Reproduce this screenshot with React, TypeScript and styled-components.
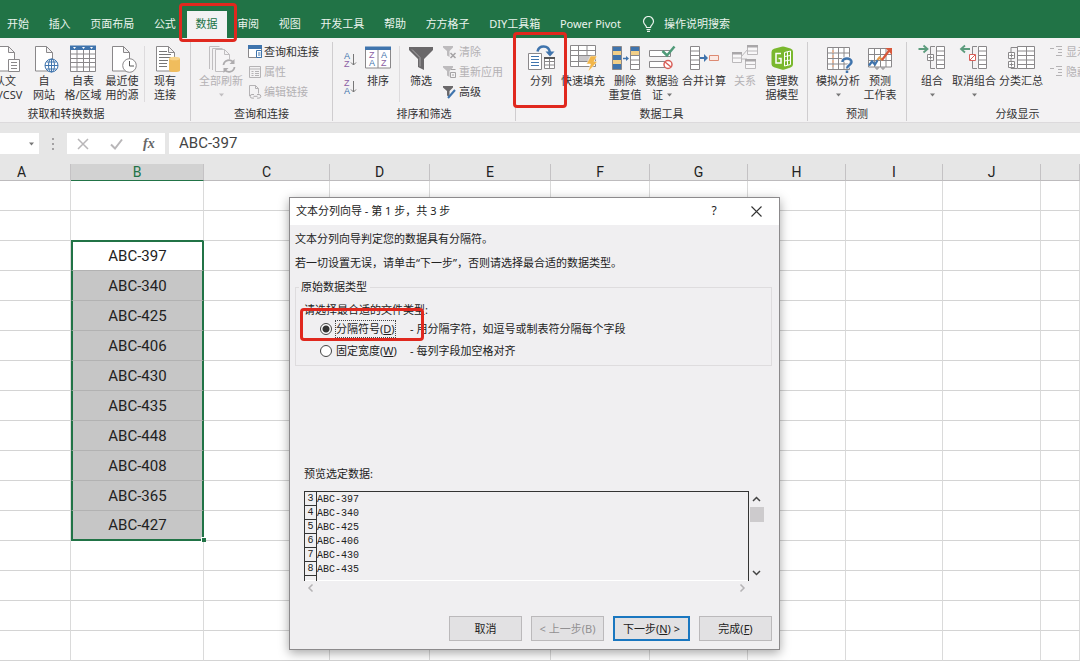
import React from 'react';
import styled, { createGlobalStyle, css } from 'styled-components';

const GREEN = '#217346';
const SANS = '"Noto Sans", "Noto Sans CJK SC", sans-serif';
const CELL = 'Roboto, "Noto Sans CJK SC", sans-serif';

const Global = createGlobalStyle`
  *, *::before, *::after { box-sizing: border-box; }
  body { margin: 0; background: #fff; font: 11px/14px ${SANS}; color: #333; }
  button, input { font: inherit; color: inherit; }
  button { background: none; border: 0; padding: 0; margin: 0; cursor: default; }
  svg { display: block; flex: none; }
`;

const Page = styled.div`
  position: relative;
  display: flex;
  flex-direction: column;
  min-height: 100vh;
  overflow: hidden;
  background: #e6e6e6;
`;

/* ---------- tab strip ---------- */
const TabBar = styled.header`
  display: flex;
  height: 38px;
  padding: 11px 0 0 7px;
  background: ${GREEN};
  color: #eaf3ed;
`;
const TabList = styled.nav`
  display: flex;
  flex: 0 0 614px;
  justify-content: space-between;
`;
const Tab = styled.button<{ $active?: boolean }>`
  position: relative;
  padding-bottom: 2px;
  white-space: nowrap;
  ${(p) => p.$active && css`
    padding: 0 9px 2px;
    margin: 0 -9px;
    background: #f3f2f3;
    color: ${GREEN};
  `}
`;
const Search = styled.button`
  display: flex;
  align-items: center;
  gap: 9px;
  margin-left: 21px;
  padding-bottom: 2px;
  white-space: nowrap;
`;
const Mark = styled.span<{ $x: number; $y: number; $w: number; $h: number }>`
  position: absolute;
  z-index: 3;
  left: ${(p) => p.$x}px;
  top: ${(p) => p.$y}px;
  width: ${(p) => p.$w}px;
  height: ${(p) => p.$h}px;
  border: 3px solid #e0281e;
  border-radius: 4px;
  pointer-events: none;
`;

/* ---------- ribbon ---------- */
const Ribbon = styled.section`
  display: flex;
  height: 84px;
  padding: 4px 0 1px;
  background: #f3f2f3;
`;
const Group = styled.div<{ $w: number; $shift?: number }>`
  display: flex;
  flex: none;
  flex-direction: column;
  width: ${(p) => p.$w}px;
  margin-left: ${(p) => p.$shift ?? 0}px;
  border-right: 1px solid #cfcdcf;
`;
const Tools = styled.div<{ $pad: number }>`
  display: flex;
  flex: 1;
  padding-left: ${(p) => p.$pad}px;
`;
const GroupName = styled.div`
  text-align: center;
`;
const BigButton = styled.button<{ $w: number; $off?: boolean }>`
  position: relative;
  display: flex;
  flex: none;
  flex-direction: column;
  align-items: center;
  width: ${(p) => p.$w}px;
  height: 60px;
  margin-top: 2px;
  white-space: nowrap;
  color: ${(p) => (p.$off ? '#b3b1b3' : '#333')};
`;
const Line = styled.span`
  display: flex;
  align-items: center;
  gap: 4px;
  height: 14px;
`;
const Divider = styled.span`
  width: 1px;
  height: 56px;
  margin: 4px 2px 0;
  background: #dddbdd;
`;
const SmallList = styled.div<{ $gap: number }>`
  display: flex;
  flex-direction: column;
  margin-left: ${(p) => p.$gap}px;
`;
const SmallButton = styled.button<{ $off?: boolean }>`
  display: flex;
  align-items: center;
  gap: 2px;
  height: 20px;
  white-space: nowrap;
  color: ${(p) => (p.$off ? '#b3b1b3' : '#333')};
`;
const SortColumn = styled.div`
  display: flex;
  flex-direction: column;
  width: 16px;
  padding-top: 4px;
`;
const SortButton = styled.button`
  display: flex;
  align-items: center;
  height: 27px;
`;

/* ---------- formula bar ---------- */
const FormulaBar = styled.section`
  display: flex;
  height: 42px;
  padding: 10px 0;
  border-top: 1px solid #dcdadc;
`;
const NameBox = styled.div`
  display: flex;
  align-items: center;
  width: 39px;
  padding-right: 5px;
  background: #fff;
`;
const NameInput = styled.input`
  flex: 1;
  min-width: 0;
  border: 0;
  outline: 0;
  background: none;
`;
const Grip = styled.span`
  display: flex;
  justify-content: center;
  align-items: center;
  width: 28px;
`;
const EntryButtons = styled.div`
  display: flex;
  align-items: center;
  justify-content: space-around;
  width: 98px;
  margin-right: 4px;
  background: #fff;
`;
const FxButton = styled.button`
  font: italic bold 14px/20px "Liberation Serif", serif;
  color: #666;
`;
const FormulaInput = styled.input`
  flex: 1;
  min-width: 0;
  padding: 0 10px 2px;
  border: 0;
  outline: 0;
  background: #fff;
  font: 15px/20px ${CELL};
  color: #444;
`;

/* ---------- sheet ---------- */
const Sheet = styled.main`
  flex: 1;
`;
const Grid = styled.table`
  width: calc(100% + 27px);
  margin-left: -27px;
  table-layout: fixed;
  border-collapse: separate;
  border-spacing: 0;
  background: #fff;
  font: 15px/20px ${CELL};
  color: #222;
`;
const Head = styled.th<{ $on?: boolean }>`
  height: 17px;
  padding: 0;
  border-right: 1px solid #c4c2c4;
  border-bottom: 1px solid ${(p) => (p.$on ? GREEN : '#bdbbbd')};
  background: ${(p) => (p.$on ? '#d2d2d2' : '#e6e6e6')};
  color: ${(p) => (p.$on ? GREEN : '#222')};
  font: 14px/16px ${CELL};
`;
const Cell = styled.td<{ $sel?: boolean; $first?: boolean; $last?: boolean; $before?: boolean }>`
  position: relative;
  height: 30px;
  padding: 0;
  border-right: 1px solid #dadada;
  border-bottom: 1px solid ${(p) => (p.$before ? GREEN : '#d4d4d4')};
  text-align: center;
  ${(p) => p.$sel && css`
    border-right: 2px solid ${GREEN};
    border-left: 2px solid ${GREEN};
    border-top: ${p.$first ? `1px solid ${GREEN}` : '0'};
    border-bottom: ${p.$last ? `2px solid ${GREEN}` : '1px solid #b2b2b2'};
    background: ${p.$first ? '#fff' : '#c6c6c6'};
  `}
`;
const FillHandle = styled.span`
  position: absolute;
  z-index: 1;
  right: -4px;
  bottom: -3px;
  width: 5px;
  height: 5px;
  border: 1px solid #fff;
  border-width: 1px 0 0 1px;
  background: ${GREEN};
`;

/* ---------- wizard dialog ---------- */
const Dialog = styled.form`
  position: absolute;
  z-index: 4;
  left: 289px;
  top: 197px;
  width: 491px;
  border: 1px solid #8c8a8c;
  background: #f0eff1;
  box-shadow: 0 3px 10px rgba(0, 0, 0, 0.35);
  color: #222;
`;
const TitleBar = styled.div`
  display: flex;
  align-items: center;
  height: 27px;
  padding: 0 17px 1px 6px;
  background: #fff;
`;
const Title = styled.h1`
  flex: 1;
  margin: 0;
  font: inherit;
`;
const TitleButton = styled.button`
  display: flex;
  justify-content: center;
  width: 12px;
  margin-left: 30px;
  font-size: 12px;
`;
const Body = styled.div`
  padding: 7px 7px 8px 5px;
`;
const Para = styled.p`
  margin: 0 0 10px;
`;
const Fieldset = styled.fieldset`
  min-width: 0;
  margin: 0;
  padding: 0 3px 3px;
  border: 1px solid #dedcde;
`;
const Legend = styled.legend`
  padding: 0 3px 0 2px;
`;
const Hint = styled.div`
  margin: 9px 0 1px;
  padding-left: 5px;
`;
const Option = styled.div`
  position: relative;
  display: flex;
  align-items: center;
  height: 22px;
  margin-left: 5px;
  padding-left: 16px;
`;
const OptionLabel = styled.label<{ $focus?: boolean }>`
  display: flex;
  align-items: center;
  gap: 3px;
  width: 90px;
  span {
    padding: 1px 0;
    border: 1px dotted ${(p) => (p.$focus ? '#444' : 'transparent')};
  }
`;
const Radio = styled.input`
  appearance: none;
  width: 12px;
  height: 12px;
  margin: 0;
  border: 1px solid #444;
  border-radius: 50%;
  background: #fff;
  &:checked {
    background: radial-gradient(circle, #333 0 3px, #fff 4px);
  }
`;
const PreviewName = styled.div`
  margin: 101px 0 10px 9px;
`;
const PreviewRow = styled.div`
  display: flex;
  margin: 0 8px 0 9px;
`;
const PreviewBox = styled.div`
  flex: 1;
  height: 90px;
  overflow: hidden;
  border: solid #333;
  border-width: 1px 1px 0 0;
  box-shadow: inset 0 -1px #fff;
`;
const PreviewTable = styled.table`
  border-collapse: separate;
  border-spacing: 0;
  font: 10px/12px "Liberation Mono", monospace;
  th {
    width: 13px;
    height: 14px;
    padding: 1px 0 0;
    border: solid #333;
    border-width: 0 1px 1px 1px;
    font-weight: 400;
  }
  td { padding: 1px 0 0; }
`;
const VScroll = styled.div`
  display: flex;
  flex-direction: column;
  align-items: center;
  width: 15px;
  padding: 4px 0;
`;
const Thumb = styled.span`
  width: 14px;
  height: 15px;
  margin: 4px 0 auto;
  background: #cdcbcd;
`;
const HScroll = styled.div`
  display: flex;
  justify-content: space-between;
  margin: 3px 26px 0 12px;
`;
const Actions = styled.div`
  display: flex;
  justify-content: flex-end;
  gap: 9px;
  margin-top: 24px;
`;
const Action = styled.button<{ $primary?: boolean }>`
  width: ${(p) => (p.$primary ? 77 : 73)}px;
  height: 25px;
  border: ${(p) => (p.$primary ? '2px solid #1a77c0' : '1px solid #bbb9bb')};
  background: #e2e1e3;
  white-space: nowrap;
  &:disabled { color: #929092; }
`;

/* ---------- icons ---------- */
const G = '#8a888a';
const B = '#3f74ad';

const Icon = ({ children, w = 30, h = 30 }: { children: React.ReactNode; w?: number; h?: number }) => (
  <svg width={w} height={h} viewBox={`0 0 ${w} ${h}`} fill="none" stroke={G} strokeWidth="1" aria-hidden="true">
    {children}
  </svg>
);
const Sheetlet = ({ x = 6, w = 17, c = G }: { x?: number; w?: number; c?: string }) => (
  <path d={`M${x + 0.5} 2.5h${w - 6}l6 6v18.5h-${w}zM${x + w - 5.5} 2.5v6h6`} fill="#fff" stroke={c} />
);
const IconText = () => (
  <Icon>
    <Sheetlet x={4} w={20} />
    <path d="M18.500 15.500h11v12h-11z" fill="#fff" />
    <path d="M21 18.500h6M21 21.500h6M21 24.500h6" />
  </Icon>
);
const IconWeb = () => (
  <Icon>
    <Sheetlet />
    <circle cx="22.500" cy="21.500" r="6.500" fill="#fff" stroke={B} />
    <ellipse cx="22.500" cy="21.500" rx="3" ry="6.500" stroke={B} />
    <path d="M22.500 15v13M16 21.500h13M17.500 18h10M17.500 25h10" stroke={B} />
  </Icon>
);
const IconTable = () => (
  <Icon>
    <path d="M2.500 2.500h25v25h-25z" fill="#fff" />
    <path d="M2 1.500h26v4.500h-26z" fill={B} stroke="none" />
    <path d="M2.500 10h25M2.500 14.500h25M2.500 18.500h25M2.500 23h25M9 6v21M15.500 6v21M21.500 6v21" />
    <path d="M5 3h3l-1.500 2zM14 3h3l-1.500 2zM22 3h3l-1.500 2z" fill="#fff" stroke="none" />
  </Icon>
);
const IconRecent = () => (
  <Icon>
    <Sheetlet x={5} />
    <circle cx="22.500" cy="21.500" r="6.800" fill="#fff" />
    <path d="M22.500 17v5h4.500" stroke="#555" />
  </Icon>
);
const IconExisting = () => (
  <Icon>
    <Sheetlet x={6} w={18} />
    <path d="M9 7.500h8M9 10.500h12M9 13.500h12M9 16.500h9M9 19.500h8M9 22.500h8" stroke="#777" />
    <path d="M19 14.500v12c0 2 11 2 11 0v-12z" fill="#f0bd5d" stroke="none" />
    <ellipse cx="24.500" cy="14.500" rx="5.500" ry="1.800" fill="#f8d48b" stroke="none" />
  </Icon>
);
const IconRefresh = () => (
  <Icon>
    <path d="M3.500 25V2.500h10M6.500 26V4.500h10" stroke="#c0bec0" />
    <path d="M9.500 5.500h9l5 5v17h-14zM18.500 5.500v5h5" fill="#f6f5f6" stroke="#c0bec0" />
    <circle cx="23" cy="22" r="7" fill="#f3f2f3" stroke="none" />
    <path d="M17.500 21a5.500 5.500 0 0 1 10-2.500M28.500 23a5.500 5.500 0 0 1-10 2.500" stroke="#aeacae" strokeWidth="1.800" />
    <path d="M28.500 15v5h-5zM17.500 29v-5h5z" fill="#aeacae" stroke="none" />
  </Icon>
);
const IconQueries = () => (
  <Icon w={14} h={14}>
    <path d="M.5.5h13v12h-13z" fill="#fff" />
    <path d="M0 0h14v4h-14z" fill={B} stroke="none" />
    <path d="M8.500 5.500h5v7h-5z" fill="#fff" stroke={B} />
    <path d="M10 8h2.500M10 10h2.500" stroke={B} />
  </Icon>
);
const IconProps = () => (
  <Icon w={14} h={14}>
    <path d="M1.500 1.500h11v11h-11zM1.500 4h11M3.500 6.500h2M7 6.500h4M3.500 8.500h2M7 8.500h4M3.500 10.500h2M7 10.500h4" stroke="#b5b3b5" />
  </Icon>
);
const IconLinks = () => (
  <Icon w={14} h={14}>
    <path d="M1.500 11V.5h6l3 3v5M7.500.5v3h3" stroke="#b5b3b5" />
    <path d="M6 9.500H4a1.800 1.800 0 0 0 0 3.600h2M9 9.500h2a1.800 1.800 0 0 1 0 3.600H9M5.500 11.300h4" stroke="#aeacae" />
  </Icon>
);
const IconAZ = ({ top, bottom }: { top: string; bottom: string }) => (
  <svg width="14" height="18" viewBox="0 0 14 18" fill="none" aria-hidden="true" fontFamily="Liberation Sans, sans-serif" fontSize="9">
    <text x="1" y="8" fill={top === 'A' ? B : '#8d5fa5'}>{top}</text>
    <text x="1" y="16" fill={top === 'A' ? '#8d5fa5' : B}>{bottom}</text>
    <path d="M10.500 3v11M8 11.500l2.500 2.500 2.500-2.500" stroke="#777" />
  </svg>
);
const IconSort = () => (
  <svg width="30" height="30" viewBox="0 0 30 30" aria-hidden="true" fontFamily="Liberation Sans, sans-serif" fontSize="9">
    <path d="M2.500 3.500h25v20.500h-25zM15 5v19" fill="#fff" stroke={G} />
    <path d="M2 2.500h26v3.500H2z" fill={B} />
    <text x="6" y="14" fill="#8d5fa5">Z</text>
    <text x="6" y="22" fill={B}>A</text>
    <text x="18" y="14" fill={B}>A</text>
    <text x="18" y="22" fill="#8d5fa5">Z</text>
  </svg>
);
const IconFilter = () => (
  <Icon>
    <path d="M3 3h24v3l-9 9v11l-6-3v-8l-9-9z" fill="#6a686a" stroke="none" />
    <path d="M6 5.500l8 8v9" stroke="#a9a7a9" />
  </Icon>
);
const Funnel = ({ c }: { c: string }) => <path d="M0 1h10v1.500L6.500 6v6L4 10.500V6L0 2.500z" fill={c} stroke="none" />;
const IconClear = () => (
  <Icon w={14} h={14}>
    <Funnel c="#bdbbbd" />
    <path d="M7.500 8l5 5M12.500 8l-5 5" stroke="#a5a3a5" strokeWidth="1.500" />
  </Icon>
);
const IconReapply = () => (
  <Icon w={14} h={14}>
    <Funnel c="#bdbbbd" />
    <path d="M8 4.500h4.500M7.500 7.500h5v5h-5zM9 10h2" stroke="#a5a3a5" fill="#f3f2f3" />
  </Icon>
);
const IconAdvanced = () => (
  <Icon w={14} h={14}>
    <Funnel c="#6a686a" />
    <path d="M5 13l7-8" stroke={B} strokeWidth="2" />
  </Icon>
);
const IconSplit = () => (
  <Icon>
    <path d="M11.500 7.500c1.500-6.500 11-7 12.500 1" stroke={B} strokeWidth="2.500" />
    <path d="M19.500 7.500h9l-4.500 5z" fill={B} stroke="none" />
    <path d="M2.500 9.500h13v16h-13z" fill="#fff" />
    <path d="M5 12.500h8M5 15.500h8M5 18.500h8M5 21.500h8" stroke={B} />
    <path d="M18.500 13.500h10v11h-10zM18.500 17.500h10M18.500 21h10M23.500 14v11" fill="#fff" />
    <path d="M18 13h11v2h-11z" fill="#555" stroke="none" />
  </Icon>
);
const IconFlash = () => (
  <Icon>
    <path d="M2.500 1.500h25v21h-25zM2.500 6.500h25M2.500 11.500h25M2.500 17.500h25M10.500 1.500v21M19 1.500v10" fill="#fff" />
    <path d="M11 12h12v5H11z" fill="#c9c7c9" stroke="none" />
    <path d="M22.500 12h6.500l-3 5.500h3.500l-9.500 10.500 2.500-8h-4z" fill="#f2b64a" stroke="#fff" strokeWidth=".5" />
  </Icon>
);
const IconDedupe = () => (
  <Icon>
    <path d="M2.500 2.500h9v23h-9z" fill={B} />
    <path d="M3 7h8v4H3zM3 16h8v4H3z" fill="#f2cf87" stroke="none" />
    <path d="M20.500 2.500h9v23h-9z" fill="#fff" />
    <path d="M21 3h8v4h-8z" fill={B} stroke="none" />
    <path d="M21 7h8v4h-8z" fill="#f2cf87" stroke="none" />
    <path d="M20.500 11.500h9M20.500 16h9M20.500 20.500h9" />
    <path d="M13 14.500h4" stroke={B} strokeWidth="1.500" />
    <path d="M16 12l3 2.500-3 2.500z" fill={B} stroke="none" />
  </Icon>
);
const IconValidate = () => (
  <Icon>
    <path d="M2.500 6.500h21v6h-21zM2.500 17.500h21v6h-21z" fill="#fff" />
    <path d="M15.500 7l4.500 4.500 7.500-9" stroke="#4f9a78" strokeWidth="2.500" />
    <circle cx="21" cy="20.500" r="4" fill="#fff" stroke="#d9605a" strokeWidth="1.500" />
    <path d="M18 18l6 5" stroke="#d9605a" strokeWidth="1.500" />
  </Icon>
);
const IconMerge = () => (
  <Icon>
    <path d="M1.500 2.500h9v23h-9zM1.500 7h9M1.500 11.500h9M1.500 16h9M1.500 20.500h9" fill="#fff" />
    <path d="M11 14h6" stroke={B} strokeWidth="2" />
    <path d="M15 10l4 4-4 4z" fill={B} stroke="none" />
    <path d="M20.500 11.500h9v5h-9z" fill="#fbe9e3" stroke="#dd8a72" />
  </Icon>
);
const IconRelation = () => (
  <Icon>
    <g stroke="#bbb9bb">
      <path d="M11 13l7-8M12 15h5v6" />
      <path d="M2.500 8.500h9v10h-9zM2.500 14h9M17.500 1.500h10v9h-10zM17.500 7h10M15.500 15.500h10v9h-10zM15.500 20.500h10" fill="#f8f7f8" />
      <path d="M2 8h10v2.500H2zM17 1h11v2.500H17zM15 15h11v2.500H15z" fill="#a9a7a9" stroke="none" />
    </g>
  </Icon>
);
const IconModel = () => (
  <Icon>
    <path d="M4.500 8q0-2.500 2.500-3.200l7.500-2q1.500-.4 3 0l6 1.700q2.500.8 2.500 3v13q0 2-2.500 3l-6 2q-1.500.6-3 0l-7.500-2.200q-2.500-.8-2.500-3z" fill="#7ab82e" stroke="none" />
    <path d="M14 9.500H9v9.500h5V14.500h-2.500" stroke="#fff" strokeWidth="1.500" />
    <path d="M17.500 8.500l6-1.500v13.500l-6 1.500zM17.500 12.500l6-1M17.500 17l6-1M20.500 8v13" stroke="#fff" />
  </Icon>
);
const IconWhatIf = () => (
  <Icon>
    <path d="M4.500 3.500h22v22h-22zM4.500 9h22M4.500 14.500h22M4.500 20h22M10 3.500v22M15.500 3.500v22M21 3.500v22" fill="#fff" />
    <path d="M10 6v17" stroke="#eab290" strokeWidth="1.500" strokeDasharray="3 2" />
    <path d="M19.500 18c0-5 9-4.500 9 0 0 3.500-4.500 3-4.500 6.500M24 26.500V29" stroke="#f3f2f3" strokeWidth="4" />
    <path d="M19.500 18c0-5 9-4.500 9 0 0 3.500-4.500 3-4.500 6.500M24 26.500V29" stroke={B} strokeWidth="2.500" />
  </Icon>
);
const IconForecast = () => (
  <Icon>
    <path d="M3.500 4.500h23v18.500h-23zM3.500 10.500h23M3.500 16.500h23M9.500 4.500v18.500M15.500 4.500v18.500M21 4.500v18.500M11 23v2h2v-2M17 23v2h2v-2" fill="#fff" />
    <path d="M4 21.500l3-4 3 3 3-5" stroke={B} strokeWidth="2.200" />
    <path d="M12.500 16l2-2.500 3 2.500" stroke="#e39a4a" strokeWidth="2.200" />
    <path d="M17 16l7.500-10" stroke="#d8583b" strokeWidth="2.200" />
    <path d="M20.500 4h6.500v7z" fill="#d8583b" stroke="none" />
  </Icon>
);
const Rows = ({ x, w = 8 }: { x: number; w?: number }) => (
  <path d={`M${x} 2.500h${w}v22h-${w}zM${x} 7h${w}M${x} 11.500h${w}M${x} 16h${w}M${x} 20.500h${w}`} fill="#fff" />
);
const IconGroup = () => (
  <Icon>
    <Rows x={19.500} />
    <path d="M18 2.500h-4.500v22H18" />
    <path d="M10.500 10.500h6v6h-6zM11.500 13.500h4M13.500 11.500v4" fill="#fff" />
    <path d="M1.500 5h9M6.500 1.500l4 3.500-4 3.500" stroke="#5c9c7d" strokeWidth="1.800" />
  </Icon>
);
const IconUngroup = () => (
  <Icon>
    <Rows x={19.500} />
    <path d="M18 2.500h-4.500v22H18" />
    <path d="M10.500 10.500h6v6h-6zM11 16l5-5" fill="#fff" stroke="#d9605a" />
    <path d="M2 5h9M6 1.500l-4 3.500 4 3.500" stroke="#5c9c7d" strokeWidth="1.800" />
  </Icon>
);
const IconSubtotal = () => (
  <Icon>
    <Rows x={11.500} w={17} />
    <path d="M20.500 2.500v22M11 3.500H5v21h6" />
    <path d="M2.500 8.500h6v6h-6zM3.500 11.500h4M5.500 9.500v4M2.500 17.500h6v6h-6zM3.500 20.500h4M5.500 18.500v4" fill="#fff" />
  </Icon>
);
const IconDetail = () => (
  <Icon w={14} h={14}>
    <path d="M0 3.500h4M6 1.500h6M8 4.500h4M8 7.500h4M6 10.500h6" stroke="#b5b3b5" />
  </Icon>
);
const Caret = ({ c = '#777' }: { c?: string }) => (
  <svg width="5" height="4" viewBox="0 0 5 4" aria-hidden="true"><path d="M0 .5h5L2.500 3.500z" fill={c} /></svg>
);
const Chevron = ({ d, c = '#444' }: { d: string; c?: string }) => (
  <svg width="9" height="8" viewBox="0 0 9 8" fill="none" stroke={c} strokeWidth="1.500" aria-hidden="true"><path d={d} /></svg>
);

/* ---------- composed pieces ---------- */
type ToolProps = {
  w: number;
  icon: React.ReactNode;
  lines: string[];
  caret?: boolean;
  off?: boolean;
  children?: React.ReactNode;
};
const Tool = ({ w, icon, lines, caret, off, children }: ToolProps) => (
  <BigButton type="button" $w={w} $off={off}>
    {icon}
    {lines.map((l, i) => (
      <Line key={l}>
        {l}
        {caret && i === 1 && <Caret />}
      </Line>
    ))}
    {caret && lines.length === 1 && <Line><Caret c={off ? '#c0bec0' : '#777'} /></Line>}
    {children}
  </BigButton>
);

const TABS = ['开始', '插入', '页面布局', '公式', '数据', '审阅', '视图', '开发工具', '帮助', '方方格子', 'DIY工具箱', 'Power Pivot'];
const COLUMNS: [string, number | undefined][] = [
  ['A', 98], ['B', 133], ['C', 126], ['D', 100], ['E', 121], ['F', 99], ['G', 98], ['H', 98], ['I', 97], ['J', 98], ['', undefined],
];
const CODES = ['ABC-397', 'ABC-340', 'ABC-425', 'ABC-406', 'ABC-430', 'ABC-435', 'ABC-448', 'ABC-408', 'ABC-365', 'ABC-427'];
const ROWS = Array.from({ length: 16 }, (_, i) => i + 1);

export default function App() {
  return (
    <Page>
      <Global />
      <TabBar>
        <TabList>
          {TABS.map((t) => (
            <Tab key={t} type="button" $active={t === '数据'}>
              {t}
              {t === '数据' && <Mark $x={-8} $y={-8} $w={58} $h={39} />}
            </Tab>
          ))}
        </TabList>
        <Search type="button">
          <svg width="13" height="16" viewBox="0 0 13 16" fill="none" stroke="#eaf3ed" strokeWidth="1.200" aria-hidden="true">
            <path d="M4.500 11.500c0-2.500-3-3-3-6a5 5 0 0 1 10 0c0 3-3 3.500-3 6zM4.500 13.500h4M5 15.300h3" />
          </svg>
          操作说明搜索
        </Search>
      </TabBar>

      <Ribbon>
        <Group $w={249} $shift={-58}>
          <Tools $pad={44}>
            <Tool w={38} icon={<IconText />} lines={['从文', '本/CSV']} />
            <Tool w={40} icon={<IconWeb />} lines={['自', '网站']} />
            <Tool w={38} icon={<IconTable />} lines={['自表', '格/区域']} />
            <Tool w={40} icon={<IconRecent />} lines={['最近使', '用的源']} />
            <Divider />
            <Tool w={36} icon={<IconExisting />} lines={['现有', '连接']} />
          </Tools>
          <GroupName>获取和转换数据</GroupName>
        </Group>
        <Group $w={142}>
          <Tools $pad={7}>
            <Tool w={46} off icon={<IconRefresh />} lines={['全部刷新']} caret />
            <SmallList $gap={4}>
              <SmallButton type="button"><IconQueries />查询和连接</SmallButton>
              <SmallButton type="button" $off><IconProps />属性</SmallButton>
              <SmallButton type="button" $off><IconLinks />编辑链接</SmallButton>
            </SmallList>
          </Tools>
          <GroupName>查询和连接</GroupName>
        </Group>
        <Group $w={183}>
          <Tools $pad={10}>
            <SortColumn>
              <SortButton type="button" aria-label="升序"><IconAZ top="A" bottom="Z" /></SortButton>
              <SortButton type="button" aria-label="降序"><IconAZ top="Z" bottom="A" /></SortButton>
            </SortColumn>
            <Tool w={38} icon={<IconSort />} lines={['排序']} />
            <Divider />
            <Tool w={38} icon={<IconFilter />} lines={['筛选']} />
            <SmallList $gap={3}>
              <SmallButton type="button" $off><IconClear />清除</SmallButton>
              <SmallButton type="button" $off><IconReapply />重新应用</SmallButton>
              <SmallButton type="button"><IconAdvanced />高级</SmallButton>
            </SmallList>
          </Tools>
          <GroupName>排序和筛选</GroupName>
        </Group>
        <Group $w={292}>
          <Tools $pad={3}>
            <Tool w={44} icon={<IconSplit />} lines={['分列']}>
              <Mark $x={-6} $y={-12} $w={54} $h={76} />
            </Tool>
            <Tool w={40} icon={<IconFlash />} lines={['快速填充']} />
            <Tool w={44} icon={<IconDedupe />} lines={['删除', '重复值']} />
            <Tool w={30} icon={<IconValidate />} lines={['数据验', '证']} caret />
            <Tool w={54} icon={<IconMerge />} lines={['合并计算']} />
            <Tool w={28} off icon={<IconRelation />} lines={['关系']} />
            <Tool w={46} icon={<IconModel />} lines={['管理数', '据模型']} />
          </Tools>
          <GroupName>数据工具</GroupName>
        </Group>
        <Group $w={99}>
          <Tools $pad={8}>
            <Tool w={44} icon={<IconWhatIf />} lines={['模拟分析']} caret />
            <Tool w={40} icon={<IconForecast />} lines={['预测', '工作表']} />
          </Tools>
          <GroupName>预测</GroupName>
        </Group>
        <Group $w={222}>
          <Tools $pad={5}>
            <Tool w={40} icon={<IconGroup />} lines={['组合']} caret />
            <Tool w={44} icon={<IconUngroup />} lines={['取消组合']} caret />
            <Tool w={50} icon={<IconSubtotal />} lines={['分类汇总']} />
            <SmallList $gap={4}>
              <SmallButton type="button" $off><IconDetail />显示明细数据</SmallButton>
              <SmallButton type="button" $off><IconDetail />隐藏明细数据</SmallButton>
            </SmallList>
          </Tools>
          <GroupName>分级显示</GroupName>
        </Group>
      </Ribbon>

      <FormulaBar>
        <NameBox>
          <NameInput aria-label="名称框" defaultValue="" />
          <Caret />
        </NameBox>
        <Grip>
          <svg width="2" height="12" viewBox="0 0 2 12" fill="#a3a1a3" aria-hidden="true">
            <path d="M0 0h2v2H0zM0 5h2v2H0zM0 10h2v2H0z" />
          </svg>
        </Grip>
        <EntryButtons>
          <button type="button" aria-label="取消">
            <svg width="12" height="12" viewBox="0 0 12 12" stroke="#b8b6b8" strokeWidth="1.500" aria-hidden="true"><path d="M1 1l10 10M11 1L1 11" /></svg>
          </button>
          <button type="button" aria-label="输入">
            <svg width="13" height="12" viewBox="0 0 13 12" fill="none" stroke="#b8b6b8" strokeWidth="2" aria-hidden="true"><path d="M1 6.500l4 4 7-9" /></svg>
          </button>
          <FxButton type="button">fx</FxButton>
        </EntryButtons>
        <FormulaInput aria-label="编辑栏" defaultValue="ABC-397" />
      </FormulaBar>

      <Sheet>
        <Grid>
          <colgroup>
            {COLUMNS.map(([name, w]) => <col key={name} width={w} />)}
          </colgroup>
          <thead>
            <tr>
              {COLUMNS.map(([name]) => <Head key={name} scope="col" $on={name === 'B'}>{name}</Head>)}
            </tr>
          </thead>
          <tbody>
            {ROWS.map((r) => (
              <tr key={r}>
                {COLUMNS.map(([name]) => {
                  const code = name === 'B' ? CODES[r - 3] : undefined;
                  return (
                    <Cell key={name} $sel={!!code} $first={r === 3} $last={r === 12} $before={name === 'B' && r === 2}>
                      {code}
                      {code && r === 12 && <FillHandle />}
                    </Cell>
                  );
                })}
              </tr>
            ))}
          </tbody>
        </Grid>
      </Sheet>

      <Dialog role="dialog" aria-labelledby="wizard-title">
        <TitleBar>
          <Title id="wizard-title">文本分列向导 - 第 1 步，共 3 步</Title>
          <TitleButton type="button">?</TitleButton>
          <TitleButton type="button" aria-label="关闭">
            <svg width="11" height="11" viewBox="0 0 11 11" stroke="#333" strokeWidth="1.100" aria-hidden="true"><path d="M.5.5l10 10M10.500.5l-10 10" /></svg>
          </TitleButton>
        </TitleBar>
        <Body>
          <Para>文本分列向导判定您的数据具有分隔符。</Para>
          <Para>若一切设置无误，请单击“下一步”，否则请选择最合适的数据类型。</Para>
          <Fieldset>
            <Legend>原始数据类型</Legend>
            <Hint>请选择最合适的文件类型:</Hint>
            <Option>
              <OptionLabel $focus>
                <Radio type="radio" name="kind" defaultChecked />
                <span>分隔符号(<u>D</u>)</span>
              </OptionLabel>
              - 用分隔字符，如逗号或制表符分隔每个字段
              <Mark $x={-4} $y={-10} $w={124} $h={33} />
            </Option>
            <Option>
              <OptionLabel>
                <Radio type="radio" name="kind" />
                <span>固定宽度(<u>W</u>)</span>
              </OptionLabel>
              - 每列字段加空格对齐
            </Option>
          </Fieldset>
          <PreviewName>预览选定数据:</PreviewName>
          <PreviewRow>
            <PreviewBox>
              <PreviewTable>
                <tbody>
                  {CODES.slice(0, 6).map((c, i) => (
                    <tr key={c}>
                      <th scope="row">{i + 3}</th>
                      <td>{c}</td>
                    </tr>
                  ))}
                  <tr><th /><td /></tr>
                </tbody>
              </PreviewTable>
            </PreviewBox>
            <VScroll>
              <Chevron d="M1 6l3.500-3.500L8 6" />
              <Thumb />
              <Chevron d="M1 2l3.500 3.500L8 2" />
            </VScroll>
          </PreviewRow>
          <HScroll>
            <Chevron d="M5.500.5L2 4l3.500 3.500" c="#b5b3b5" />
            <Chevron d="M3.500.5L7 4 3.500 7.500" c="#b5b3b5" />
          </HScroll>
          <Actions>
            <Action type="button">取消</Action>
            <Action type="button" disabled>&lt; 上一步(B)</Action>
            <Action type="button" $primary>下一步(<u>N</u>) &gt;</Action>
            <Action type="button">完成(<u>F</u>)</Action>
          </Actions>
        </Body>
      </Dialog>
    </Page>
  );
}
